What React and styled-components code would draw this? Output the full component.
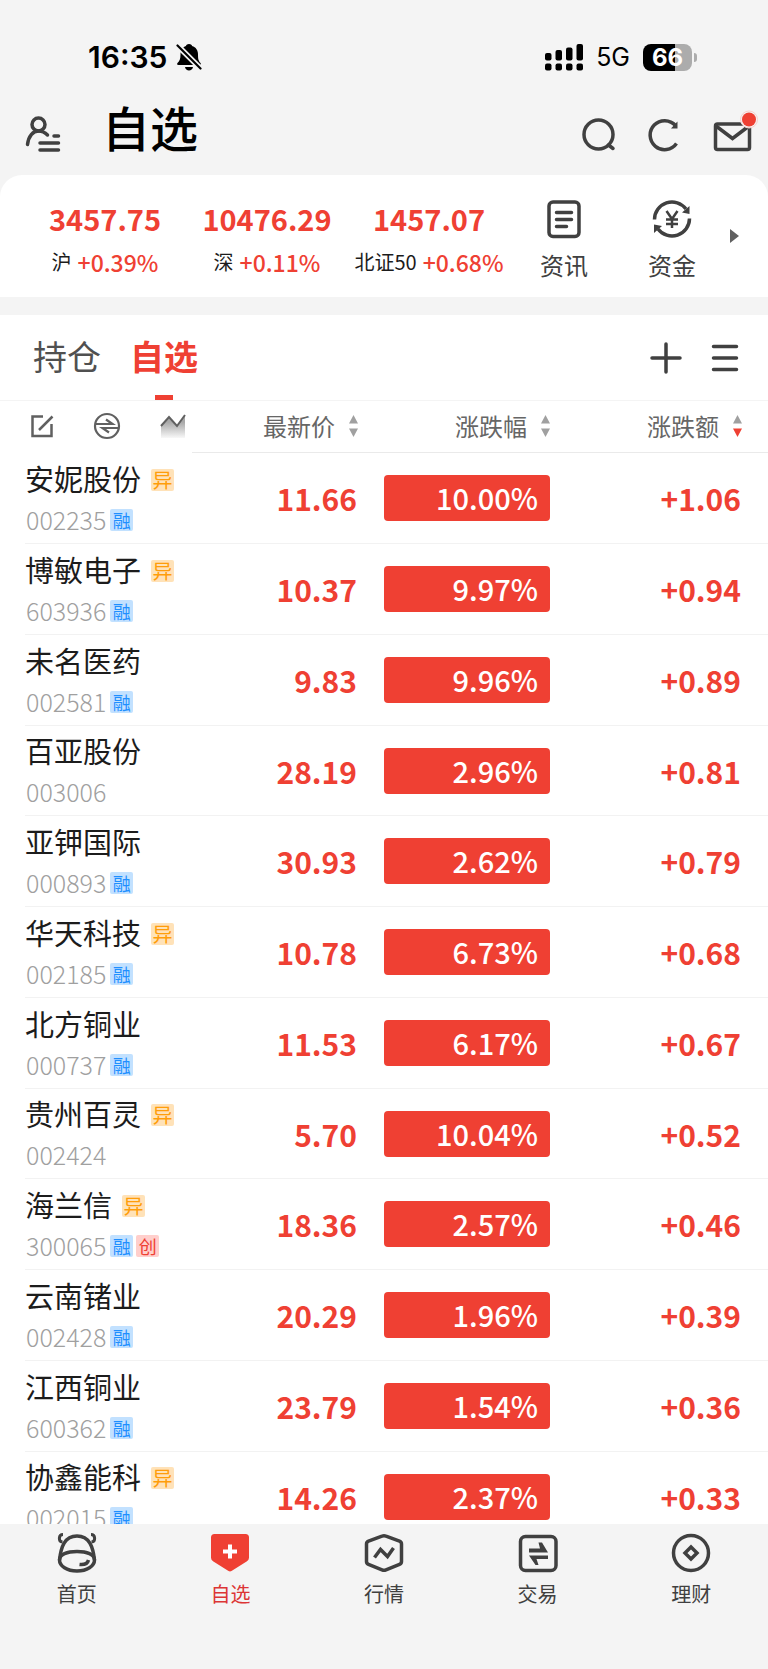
import React from "react";
import styled, { createGlobalStyle } from "styled-components";

const RED = "#ef4033";
const INK = "#404040";

const GlobalStyle = createGlobalStyle`
  * { box-sizing: border-box; }
  body {
    margin: 0;
    background: #f4f4f4;
    color: #1c1c1c;
    font-family: "Noto Sans CJK SC", "Noto Sans", sans-serif;
  }
  a { color: inherit; text-decoration: none; }
  svg { display: block; flex: none; }
`;

const Button = styled.button`
  border: 0;
  padding: 0;
  background: none;
  color: inherit;
  font: inherit;
  cursor: pointer;
`;

const Screen = styled.div`
  display: flex;
  flex-direction: column;
  height: 100vh;
  background: #f4f4f4;
`;

const StatusBar = styled.div`
  display: flex;
  align-items: center;
  justify-content: space-between;
  height: 95px;
  padding: 19px 71px 0 88px;
  color: #000;
  font-family: Inter, sans-serif;
`;

const StatusGroup = styled.div`
  display: flex;
  align-items: center;
  gap: ${(p) => p.$gap}px;
`;

const Clock = styled.time`
  font-size: 30px;
  line-height: 40px;
  font-weight: 600;
`;

const Network = styled.span`
  font-size: 25px;
  line-height: 40px;
`;

const Battery = styled.div`
  display: flex;
  align-items: center;
  gap: 2px;
`;

const BatteryBody = styled.div`
  width: 49px;
  height: 27px;
  border-radius: 8px;
  background: linear-gradient(90deg, #000 66%, #acacac 66%);
  color: #fff;
  font-size: 24px;
  line-height: 27px;
  font-weight: 700;
  text-align: center;
`;

const BatteryTip = styled.span`
  width: 3px;
  height: 9px;
  border-radius: 0 4px 4px 0;
  background: #acacac;
`;

const AppBar = styled.header`
  display: flex;
  align-items: center;
  height: 80px;
  padding: 0 14px 0 25px;
  color: ${INK};
`;

const Title = styled.h1`
  flex: 1;
  margin: 0 0 18px 39px;
  color: #000;
  font-size: 48px;
  line-height: 60px;
  font-weight: 500;
`;

const Actions = styled.div`
  display: flex;
  align-items: center;
  gap: ${(p) => p.$gap}px;
`;

const Card = styled.section`
  display: grid;
  grid-template-columns: 162fr 162fr 162fr 108fr 108fr 42fr;
  align-items: center;
  height: 122px;
  margin-bottom: 18px;
  padding-left: 24px;
  border-radius: 22px 22px 0 0;
  background: #fff;
`;

const IndexItem = styled.div`
  display: flex;
  flex-direction: column;
  align-items: center;
  gap: 8px;
  padding-top: 8px;
  white-space: nowrap;
`;

const IndexValue = styled.strong`
  color: ${RED};
  font-size: 29px;
  line-height: 36px;
  font-weight: 700;
`;

const IndexNote = styled.div`
  display: flex;
  align-items: center;
  gap: 6px;
  font-size: 20px;
  line-height: 36px;
`;

const IndexChange = styled.span`
  color: ${RED};
  font-size: 23px;
  font-weight: 500;
`;

const Shortcut = styled(Button)`
  display: flex;
  flex-direction: column;
  align-items: center;
  gap: 8px;
  padding-top: 9px;
  color: ${INK};
  font-size: 24px;
  line-height: 36px;
`;

const More = styled(Button)`
  display: flex;
  padding-left: 4px;
`;

const Panel = styled.main`
  flex: 1;
  min-height: 0;
  overflow: hidden;
  background: #fff;
`;

const TabBar = styled.div`
  display: flex;
  align-items: center;
  justify-content: space-between;
  height: 86px;
  padding: 0 29px 0 33px;
  border-bottom: 1px solid #f4f4f4;
  color: ${INK};
`;

const Tabs = styled.div`
  display: flex;
  gap: 29px;
  height: 100%;
`;

const Tab = styled(Button)`
  display: flex;
  flex-direction: column;
  align-items: center;
  justify-content: space-between;
  height: 100%;
  padding-top: 16px;
  color: ${(p) => (p.$active ? RED : "#505050")};
  font-size: 34px;
  line-height: 50px;
  font-weight: ${(p) => (p.$active ? 700 : 400)};
  &::after {
    content: "";
    width: 18px;
    height: 5px;
    background: ${(p) => (p.$active ? RED : "transparent")};
  }
`;

const Quotes = styled.table`
  width: 100%;
  table-layout: fixed;
  border-collapse: separate;
  border-spacing: 0;
`;

const HeadCell = styled.th`
  height: 52px;
  padding: 0 26px 2px 0;
  border-bottom: 1px solid #eaeaea;
  font-weight: 400;
`;

const ToolCell = styled.th`
  height: 52px;
  padding: 0 0 2px 30px;
`;

const Tools = styled.div`
  display: flex;
  align-items: center;
  gap: 39px;
  color: #606060;
`;

const Sort = styled(Button)`
  display: flex;
  align-items: center;
  gap: 14px;
  margin-left: auto;
  color: #666;
  font-size: 24px;
  line-height: 36px;
  white-space: nowrap;
`;

const Row = styled.tr`
  height: 91px;
  &:nth-child(4n) { height: 90px; }
`;

const StockCell = styled.td`
  height: inherit;
  padding: 0 0 0 25px;
  background: linear-gradient(#f2f2f2, #f2f2f2) 25px 100% / 100% 1px no-repeat;
`;

const Stock = styled.div`
  padding-top: 2px;
  white-space: nowrap;
`;

const StockLine = styled.div`
  display: flex;
  align-items: center;
  gap: ${(p) => p.$gap}px;
  height: 40px;
`;

const Name = styled.span`
  margin-bottom: 4px;
  font-size: 29px;
  line-height: 36px;
`;

const Code = styled.span`
  margin-bottom: 2px;
  padding: 0 1px;
  color: #a0a0a0;
  font-size: 25px;
  line-height: 38px;
  font-weight: 300;
`;

const TAGS = {
  异: ["#ffe2b8", "#ff9d0a"],
  融: ["#c2e1ff", "#1e8fff"],
  创: ["#ffcfcc", "#ef4033"],
};

const TagBox = styled.span`
  width: 23px;
  height: 22px;
  border-radius: 2px;
  background: ${(p) => TAGS[p.$kind][0]};
  color: ${(p) => TAGS[p.$kind][1]};
  font-size: ${(p) => (p.$kind === "异" ? 20 : 18)}px;
  line-height: 22px;
  text-align: center;
`;

const NumCell = styled.td`
  padding: 0 27px 0 0;
  border-bottom: 1px solid #f2f2f2;
  color: ${RED};
  font-size: 30px;
  line-height: 46px;
  font-weight: 700;
  text-align: right;
`;

const PctCell = styled.td`
  padding: 0 26px 0 0;
  border-bottom: 1px solid #f2f2f2;
`;

const Pct = styled.div`
  height: 46px;
  padding-right: 12px;
  border-radius: 4px;
  background: ${RED};
  color: #fff;
  font-size: 29px;
  line-height: 45px;
  font-weight: 500;
  text-align: right;
`;

const NavBar = styled.nav`
  display: grid;
  grid-template-columns: repeat(5, 1fr);
  height: 145px;
  padding-top: 9px;
  background: #f4f4f4;
`;

const NavLink = styled.a`
  display: flex;
  flex-direction: column;
  align-items: center;
  gap: 6px;
  color: ${(p) => (p.$active ? "#dc3535" : INK)};
  font-size: 20px;
  line-height: 30px;
`;

const Svg = ({ w, h, sw = 3.5, children }) => (
  <svg width={w} height={h} viewBox={`0 0 ${w} ${h}`} fill="none" stroke="currentColor" strokeWidth={sw} aria-hidden="true">
    {children}
  </svg>
);

const BellOff = () => (
  <Svg w={26} h={28} sw={0}>
    <path fill="currentColor" d="M13 1C15 1 16 2 16 3c4 1 6 4.500 6 8.500 0 4.500.5 6.500 2.500 8.500.8 1 .3 2-1 2h-21c-1.400 0-1.800-1-1-2 2-2 3-4 3-8.500 0-4 2-7.500 5.500-8.500C10 2 11 1 13 1zM9 24h8c-.3 2.300-2 3.500-4 3.500s-3.700-1.200-4-3.500z" />
    <path stroke="#f4f4f4" strokeWidth="5.500" d="M0 1l26 26" />
    <path stroke="currentColor" strokeWidth="2.200" strokeLinecap="round" d="M1.500 2.500l23 23" />
  </Svg>
);

const Signal = () => (
  <Svg w={38} h={27} sw={0}>
    <g fill="currentColor">
      <rect x="0" y="9" width="6.500" height="7.500" rx="2" />
      <rect x="10.500" y="6" width="6.500" height="10.500" rx="2" />
      <rect x="21" y="3.500" width="6.500" height="13" rx="2" />
      <rect x="31.500" y="0" width="6.500" height="16.500" rx="2" />
      {[0, 10.5, 21, 31.5].map((x) => (
        <rect key={x} x={x} y="19.500" width="6.500" height="7" rx="2" />
      ))}
    </g>
  </Svg>
);

const UserList = () => (
  <Svg w={38} h={38}>
    <circle cx="13.500" cy="8.500" r="6.500" />
    <path strokeLinecap="round" d="M2.500 28.500C3.500 20 8 15 13.500 15c3.500 0 6.500 1.500 9 4M29 20h4.500M15 27h18.500M15 34h18.500" />
  </Svg>
);

const SearchIcon = () => (
  <Svg w={34} h={34}>
    <circle cx="16.500" cy="16.500" r="14.500" />
    <path strokeLinecap="round" d="M26.500 27l4.500 3.500" />
  </Svg>
);

const Refresh = () => (
  <Svg w={32} h={34}>
    <path d="M28.500 25.500A14.500 14.500 0 1 1 27.500 7.500" />
    <path fill="currentColor" stroke="none" d="M23 10.500h6.500V3.500l-2 2z" />
  </Svg>
);

const Mail = () => (
  <Svg w={42} h={34}>
    <rect x="3.500" y="6" width="34" height="25.500" rx="2" />
    <path d="M4 8l16.500 12.500L37 8" />
    <circle cx="37" cy="1.500" r="8.500" fill="#f4f4f4" stroke="#f8d0cd" strokeWidth="1" />
    <circle cx="37" cy="1.500" r="7" fill={RED} stroke="none" />
  </Svg>
);

const MailButton = styled(Button)`
  svg { overflow: visible; }
`;

const News = () => (
  <Svg w={38} h={40}>
    <rect x="4" y="3" width="30" height="34.500" rx="4" />
    <path strokeLinecap="round" d="M11.500 13.500h15M11.500 20.500h15M11.500 27.500h10" />
  </Svg>
);

const Funds = () => (
  <Svg w={40} h={40}>
    <path d="M2.500 20.500A17.500 17.500 0 0 1 34 10M37.500 19.500A17.500 17.500 0 0 1 6 30" />
    <path fill="currentColor" stroke="none" d="M30 13.500l7.500 1.500V7zM10 27l-8-1.500v8.500z" />
    <path strokeWidth="2.500" d="M14.500 12l5.500 8 5.500-8M14 20.500h12M14 25h12M20 20v9" />
  </Svg>
);

const Caret = () => (
  <Svg w={9} h={14} sw={0}>
    <path fill="#606060" d="M0 0l9 7-9 7z" />
  </Svg>
);

const Plus = () => (
  <Svg w={32} h={32}>
    <path strokeLinecap="round" d="M16 2v28M2 16h28" />
  </Svg>
);

const Menu = () => (
  <Svg w={28} h={32}>
    <path strokeLinecap="round" d="M2.500 4.500h23M2.500 16h23M2.500 27.500h23" />
  </Svg>
);

const Edit = () => (
  <Svg w={24} h={24} sw={2.5}>
    <path d="M13 2.500H2.500v19.500h19V10M9 16L22.500 2.500" />
  </Svg>
);

const Exchange = () => (
  <Svg w={28} h={28} sw={2.2}>
    <circle cx="14" cy="14" r="12" />
    <path d="M2 12h17.500L13 7.500M26 16H9.500l6.500 4.500" />
  </Svg>
);

const Trend = () => (
  <Svg w={26} h={26} sw={2}>
    <defs>
      <linearGradient id="trend" x1="0" y1="0" x2="0" y2="1">
        <stop offset="0.300" stopColor="#a8a8a8" />
        <stop offset="1" stopColor="#f8f8f8" />
      </linearGradient>
    </defs>
    <path fill="url(#trend)" stroke="none" d="M1 12l8-8 8 9 8-11v23H1z" />
    <path d="M1 13L9 4l8 9L25 2" />
  </Svg>
);

const Arrows = ({ down }) => (
  <Svg w={9} h={22} sw={0}>
    <path fill="#a0a0a0" d="M4.500 0L9 8.500H0z" />
    <path fill={down ? RED : "#a0a0a0"} d="M4.500 22L9 13.500H0z" />
  </Svg>
);

const Bull = () => (
  <Svg w={40} h={40}>
    <path d="M2.500 27C4 14 7.500 3 20 3s16 11 17.500 24" />
    <path d="M2.500 27C2.500 21.500 10 18.500 20 18.500S37.500 21.500 37.500 27c0 6-7.500 11-17.500 11S2.500 33 2.500 27z" />
    <path strokeWidth="3" d="M6 1.500C1.500 1.500 1 8.500 5.500 9M34 1.500c4.500 0 5 7 .5 7.500" />
    <path d="M22.500 31.500c4.500.5 8-.5 9-4.500" />
  </Svg>
);

const Watch = () => (
  <Svg w={40} h={40} sw={0}>
    <path fill={RED} d="M4.500 1h31A3.500 3.500 0 0 1 39 4.500v20.300a4 4 0 0 1-2 3.400L21.500 38a3 3 0 0 1-3 0L3 28.200a4 4 0 0 1-2-3.400V4.500A3.500 3.500 0 0 1 4.500 1z" />
    <path stroke="#fff" strokeWidth="4" d="M20 11.500v14M13 18.500h14" />
  </Svg>
);

const Market = () => (
  <Svg w={40} h={40}>
    <path strokeLinejoin="round" d="M18 3.200L4.500 8.200Q2.500 9 2.500 11v17.500q0 2 2 2.800L18 36.800q2 .8 4 0l13.500-5.500q2-.8 2-2.800V11q0-2-2-2.800L22 3.200q-2-.8-4 0z" />
    <path d="M10.500 24.500l6-8 7 7 6-8.500" />
  </Svg>
);

const Trade = () => (
  <Svg w={40} h={40}>
    <rect x="2.500" y="3.500" width="35.500" height="34" rx="5" />
    <path fill="currentColor" stroke="none" d="M11 15.500h11L20.500 9.500H24L30 19.500H11zM30 22.500H11l6.500 9.500H20.500L18.500 26H30z" />
  </Svg>
);

const Wealth = () => (
  <Svg w={40} h={40}>
    <circle cx="20" cy="20" r="17.500" />
    <path d="M20 14l6 6-6 6-6-6z" />
  </Svg>
);

const INDEXES = [
  ["3457.75", "沪", "+0.39%"],
  ["10476.29", "深", "+0.11%"],
  ["1457.07", "北证50", "+0.68%"],
];

const STOCKS = [
  ["安妮股份", "异", "002235", "融", "11.66", "10.00%", "+1.06"],
  ["博敏电子", "异", "603936", "融", "10.37", "9.97%", "+0.94"],
  ["未名医药", "", "002581", "融", "9.83", "9.96%", "+0.89"],
  ["百亚股份", "", "003006", "", "28.19", "2.96%", "+0.81"],
  ["亚钾国际", "", "000893", "融", "30.93", "2.62%", "+0.79"],
  ["华天科技", "异", "002185", "融", "10.78", "6.73%", "+0.68"],
  ["北方铜业", "", "000737", "融", "11.53", "6.17%", "+0.67"],
  ["贵州百灵", "异", "002424", "", "5.70", "10.04%", "+0.52"],
  ["海兰信", "异", "300065", "融创", "18.36", "2.57%", "+0.46"],
  ["云南锗业", "", "002428", "融", "20.29", "1.96%", "+0.39"],
  ["江西铜业", "", "600362", "融", "23.79", "1.54%", "+0.36"],
  ["协鑫能科", "异", "002015", "融", "14.26", "2.37%", "+0.33"],
];

const NAV = [
  ["首页", Bull],
  ["自选", Watch],
  ["行情", Market],
  ["交易", Trade],
  ["理财", Wealth],
];

const Tags = ({ text }) => [...text].map((t) => <TagBox key={t} $kind={t}>{t}</TagBox>);

export default function App() {
  return (
    <Screen>
      <GlobalStyle />
      <StatusBar>
        <StatusGroup $gap={9}>
          <Clock>16:35</Clock>
          <BellOff />
        </StatusGroup>
        <StatusGroup $gap={13}>
          <Signal />
          <Network>5G</Network>
          <Battery>
            <BatteryBody>66</BatteryBody>
            <BatteryTip />
          </Battery>
        </StatusGroup>
      </StatusBar>

      <AppBar>
        <Button aria-label="账户"><UserList /></Button>
        <Title>自选</Title>
        <Actions $gap={32}>
          <Button aria-label="搜索"><SearchIcon /></Button>
          <Button aria-label="刷新"><Refresh /></Button>
          <MailButton aria-label="消息"><Mail /></MailButton>
        </Actions>
      </AppBar>

      <Card>
        {INDEXES.map(([value, label, change]) => (
          <IndexItem key={label}>
            <IndexValue>{value}</IndexValue>
            <IndexNote>
              {label}
              <IndexChange>{change}</IndexChange>
            </IndexNote>
          </IndexItem>
        ))}
        <Shortcut><News />资讯</Shortcut>
        <Shortcut><Funds />资金</Shortcut>
        <More aria-label="更多"><Caret /></More>
      </Card>

      <Panel>
        <TabBar>
          <Tabs>
            <Tab>持仓</Tab>
            <Tab $active>自选</Tab>
          </Tabs>
          <Actions $gap={29}>
            <Button aria-label="添加"><Plus /></Button>
            <Button aria-label="菜单"><Menu /></Button>
          </Actions>
        </TabBar>
        <Quotes>
          <thead>
            <tr>
              <ToolCell>
                <Tools>
                  <Button aria-label="编辑"><Edit /></Button>
                  <Button aria-label="切换"><Exchange /></Button>
                  <Button aria-label="走势"><Trend /></Button>
                </Tools>
              </ToolCell>
              <HeadCell><Sort>最新价<Arrows /></Sort></HeadCell>
              <HeadCell><Sort>涨跌幅<Arrows /></Sort></HeadCell>
              <HeadCell><Sort>涨跌额<Arrows down /></Sort></HeadCell>
            </tr>
          </thead>
          <tbody>
            {STOCKS.map(([name, flag, code, marks, price, pct, diff]) => (
              <Row key={code}>
                <StockCell>
                  <Stock>
                    <StockLine $gap={10}><Name>{name}</Name><Tags text={flag} /></StockLine>
                    <StockLine $gap={3}><Code>{code}</Code><Tags text={marks} /></StockLine>
                  </Stock>
                </StockCell>
                <NumCell>{price}</NumCell>
                <PctCell><Pct>{pct}</Pct></PctCell>
                <NumCell>{diff}</NumCell>
              </Row>
            ))}
          </tbody>
        </Quotes>
      </Panel>

      <NavBar>
        {NAV.map(([label, Icon]) => (
          <NavLink key={label} href="#" $active={label === "自选"}>
            <Icon />
            {label}
          </NavLink>
        ))}
      </NavBar>
    </Screen>
  );
}
